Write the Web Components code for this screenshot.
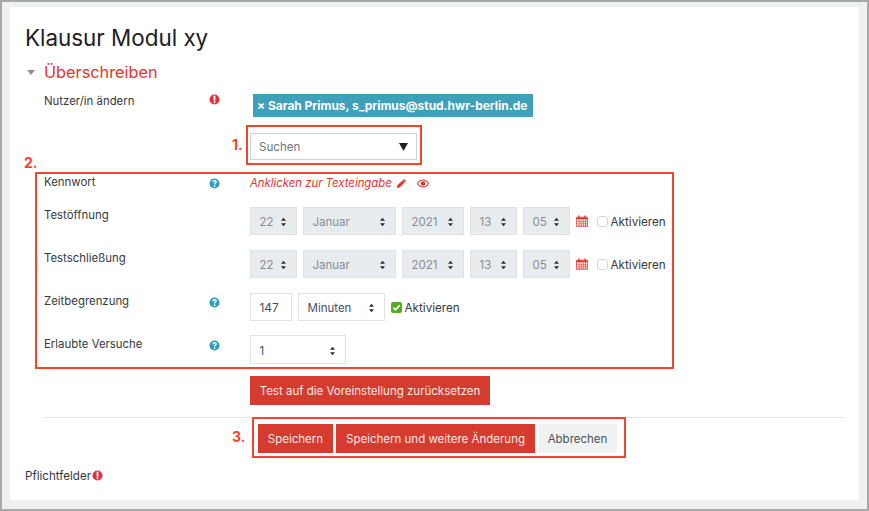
<!DOCTYPE html>
<html lang="de"><head><meta charset="utf-8"><title>Klausur Modul xy</title>
<style>
html,body{margin:0;padding:0}
body{width:869px;height:511px;overflow:hidden;font-family:Inter,Roboto,"Liberation Sans",sans-serif;color:#373a3c}
</style></head><body>
<x-frame>
  <x-title>Klausur Modul xy</x-title>
  <x-section style="margin-top:9px">Überschreiben</x-section>

  <x-row label="Nutzer/in ändern" icon="req" label-top="0" icon-top="0" style="margin-top:10px">
    <x-chip>Sarah Primus, s_primus@stud.hwr-berlin.de</x-chip>
  </x-row>
  <x-row style="margin-top:16px"><x-search>Suchen</x-search></x-row>

  <x-row label="Kennwort" icon="help" label-top="0" icon-top="3" style="margin-top:15px">
    <x-inplace>Anklicken zur Texteingabe</x-inplace>
  </x-row>
  <x-row label="Testöffnung" label-top="1" style="margin-top:16px"><x-dategroup></x-dategroup></x-row>
  <x-row label="Testschließung" label-top="1" style="margin-top:15px"><x-dategroup></x-dategroup></x-row>
  <x-row label="Zeitbegrenzung" label-top="1" icon="help" icon-top="4" style="margin-top:15px">
    <x-input style="width:42px">147</x-input>
    <x-sel w="87" style="margin-left:6px">Minuten</x-sel>
    <x-check checked style="margin-left:6px">Aktivieren</x-check>
  </x-row>
  <x-row label="Erlaubte Versuche" label-top="2" icon="help" icon-top="5" style="margin-top:14px">
    <x-sel w="96" style="height:29px;padding-top:2px">1</x-sel>
  </x-row>
  <x-row style="margin-top:12px"><x-btn w="240">Test auf die Voreinstellung zurücksetzen</x-btn></x-row>

  <x-rule></x-rule>
  <x-actions>
    <x-btn w="75">Speichern</x-btn>
    <x-btn w="199">Speichern und weitere Änderung</x-btn>
    <x-btn w="79" kind="plain">Abbrechen</x-btn>
  </x-actions>
  <x-required>Pflichtfelder</x-required>

  <x-callout n="1." style="left:236px;top:118px;width:172px;height:36px" nx="-16" ny="10"></x-callout>
  <x-callout n="2." style="left:25px;top:165px;width:635px;height:193px" nx="-13" ny="-19"></x-callout>
  <x-callout n="3." style="left:242px;top:410px;width:370px;height:37px" nx="-22" ny="10"></x-callout>
</x-frame>
<script>
const ICONS={
 req:'<svg viewBox="0 0 12 12" width="11" height="11"><circle cx="6" cy="6" r="5.5" fill="#e0313e"/><path d="M6 2.6v4" stroke="#fff" stroke-width="2" stroke-linecap="round"/><circle cx="6" cy="9" r="1.1" fill="#fff"/></svg>',
 help:'<svg viewBox="0 0 12 12" width="11" height="11"><circle cx="6" cy="6" r="5.5" fill="#2f9bbd"/><path d="M4.2 4.6C4.3 3.5 5 3 6.1 3 7.2 3 7.9 3.6 7.9 4.4 7.9 5.600 6.1 5.600 6.1 7" fill="none" stroke="#fff" stroke-width="1.4"/><circle cx="6.1" cy="8.9" r=".95" fill="#fff"/></svg>'
};
function def(name,css,html,init){
  customElements.define(name,class extends HTMLElement{
    connectedCallback(){
      if(this.shadowRoot)return;
      const s=this.attachShadow({mode:'open'});
      const a=n=>this.getAttribute(n);
      s.innerHTML='<style>'+css+'</style>'+(typeof html==='function'?html(a,this):html);
      if(init)init.call(this,s,a);
    }
  });
}
const ARROWS='<svg viewBox="0 0 8 12" width="7" height="10" style="flex:none"><path d="M4 1 7 4.6H1zM4 11 1 7.4H7z" fill="#2b2f33"/></svg>';

def('x-frame',`:host{display:block;box-sizing:border-box;width:869px;height:511px;background:#a7a9a9;padding:2px}
.bg{box-sizing:border-box;height:100%;background:#eff1f1;padding:5px 8px 9px 8px}
.panel{position:relative;box-sizing:border-box;height:100%;background:#fff;padding:17px 15px 0 15px;overflow:visible}`,
'<div class="bg"><div class="panel"><slot></slot></div></div>');

def('x-title',`:host{display:block;font-size:22.4px;line-height:27px;font-weight:400;color:#1d2125}`,'<slot></slot>');

def('x-section',`:host{display:flex;align-items:center;height:24px;font-size:16.3px;color:#e2352f}
i{width:0;height:0;border-left:4.5px solid transparent;border-right:4.5px solid transparent;border-top:5px solid #8d8f91;margin:0 9px 0 2px}`,
'<i></i><slot></slot>');

def('x-row',`:host{display:grid;grid-template-columns:165px 41px 1fr;margin-left:19px}
.l{font-size:11.4px;line-height:14px;color:#373a3c;white-space:nowrap}
.i{line-height:0}
.c{display:flex;align-items:center;min-width:0}`,
a=>`<div class="l" style="position:relative;top:${a('label-top')||0}px">${a('label')||''}</div>
<div class="i" style="padding-top:${a('icon-top')||0}px">${ICONS[a('icon')]||''}</div>
<div class="c"><slot></slot></div>`);

def('x-chip',`:host{display:block;box-sizing:border-box;margin-left:3px;height:23px;width:280px;background:#3fa1b9;color:#fff;font-size:11.95px;font-weight:700;line-height:23px;padding-left:4px;white-space:nowrap;overflow:hidden}`,
'× <slot></slot>');

def('x-search',`:host{display:flex;align-items:center;justify-content:space-between;box-sizing:border-box;width:167px;height:27px;border:1px solid #ced4da;font-size:11.6px;color:#6f757b;padding:0 8px}
svg{display:block}`,
'<slot></slot><svg viewBox="0 0 9 9" width="9" height="9"><path d="M0 1h9L4.5 9z" fill="#1d2125"/></svg>');

def('x-inplace',`:host{display:flex;align-items:center;height:16px;font-size:11.35px;font-style:italic;color:#e2352f;white-space:nowrap}
svg{display:block}`,
`<slot></slot><svg viewBox="0 0 12 12" width="11" height="11" style="margin-left:4px"><path d="M8.6 1 11 3.4 4 10.4 1 11 1.6 8z" fill="#e2352f"/><path d="M7.4 2.4l2.2 2.2" stroke="#fff" stroke-width=".7"/></svg>
<svg viewBox="0 0 14 10" width="12" height="9" style="margin-left:10px"><path d="M.6 5C2.2 2.2 4.4.9 7 .9S11.8 2.2 13.4 5C11.8 7.8 9.6 9.100 7 9.100S2.2 7.8.6 5Z" fill="none" stroke="#e2352f" stroke-width="1.2"/><circle cx="7" cy="5" r="2.7" fill="#e2352f"/></svg>`);

def('x-sel',`:host{display:flex;align-items:center;justify-content:space-between;box-sizing:border-box;height:28px;border:1px solid #dfe3e7;background:#fff;font-size:11.5px;color:#495057;padding:1px 9px 0 8.5px;white-space:nowrap;flex:none}
:host([disabled]){background:#e9ecef;color:#868e96;border-color:#dee2e6}`,
(a,el)=>{el.style.width=a('w')+'px';return '<slot></slot>'+ARROWS;});

def('x-input',`:host{display:flex;align-items:center;box-sizing:border-box;height:28px;border:1px solid #dfe3e7;font-size:11.9px;color:#495057;padding:1px 0 0 8.5px;flex:none}`,'<slot></slot>');

def('x-check',`:host{display:flex;align-items:center;font-size:11.7px;color:#373a3c;white-space:nowrap;gap:2.5px;padding-top:1px}
i{display:block;box-sizing:border-box;width:11px;height:11px;border:1px solid #d5d8dc;border-radius:3px;background:#fff}
svg{display:block}`,
a=>(a('checked')!==null?'<svg viewBox="0 0 11 11" width="11" height="11"><rect width="11" height="11" rx="2" fill="#55ae1f"/><path d="M2.4 5.6 4.6 7.8 8.7 3.2" fill="none" stroke="#fff" stroke-width="1.7"/></svg>':'<i></i>')+'<slot></slot>');

def('x-dategroup',`:host{display:flex;align-items:center}
svg{display:block;margin-left:6px;flex:none}`,
()=>`<x-sel disabled w="47">22</x-sel><x-sel disabled w="93" style="margin-left:6px">Januar</x-sel><x-sel disabled w="62" style="margin-left:6px">2021</x-sel><x-sel disabled w="47" style="margin-left:6px">13</x-sel><x-sel disabled w="47" style="margin-left:6px">05</x-sel>
<svg viewBox="0 0 12 12" width="12" height="12"><path d="M1 2.2h10a.6.6 0 0 1 .6.6v8.4a.6.6 0 0 1-.6.6H1a.6.6 0 0 1-.6-.6V2.800a.6.6 0 0 1 .6-.6z" fill="#fff" stroke="#e2352f" stroke-width=".8"/><path d="M.4 2.400h11.200v2H.4z" fill="#e2352f"/><path d="M3 .6v2.400M9 .6v2.400" stroke="#e2352f" stroke-width="1.300"/><path d="M3.200 4.500v7M5.300 4.500v7M7.400 4.500v7M9.500 4.500v7M.4 6.400h11.200M.4 8.300h11.200M.4 10.200h11.200" stroke="#e2352f" stroke-width=".6"/></svg>
<x-check style="margin-left:9px">Aktivieren</x-check>`);

def('x-btn',`:host{display:flex;align-items:center;justify-content:center;box-sizing:border-box;height:28.500px;padding-top:1px;background:#d53c2f;color:#fbe9e7;font-size:11.5px;white-space:nowrap;flex:none}
:host([kind=plain]){background:#f0f1f1;color:#4f5357}`,
(a,el)=>{el.style.width=a('w')+'px';return '<slot></slot>';});

def('x-rule',`:host{display:block;height:1px;background:#e4e7ec;margin:12.500px 0 0 19px;width:800px}`,'');

def('x-actions',`:host{display:flex;margin:6px 0 0 233px;gap:3px}`,'<slot></slot>');

def('x-required',`:host{display:flex;align-items:center;margin-top:15px;height:16px;font-size:11.6px;color:#373a3c}
span{line-height:0;margin-left:1px}`,'<slot></slot><span>'+ICONS.req+'</span>');

def('x-callout',`:host{position:absolute;display:block;box-sizing:content-box;border:2px solid #f4452c;pointer-events:none}
b{position:absolute;font-size:14px;line-height:16px;font-weight:700;color:#f4452c;font-family:Inter,Roboto,"Liberation Sans",sans-serif}`,
a=>`<b style="left:${a('nx')}px;top:${a('ny')}px">${a('n')}</b>`);
</script>
</body></html>
